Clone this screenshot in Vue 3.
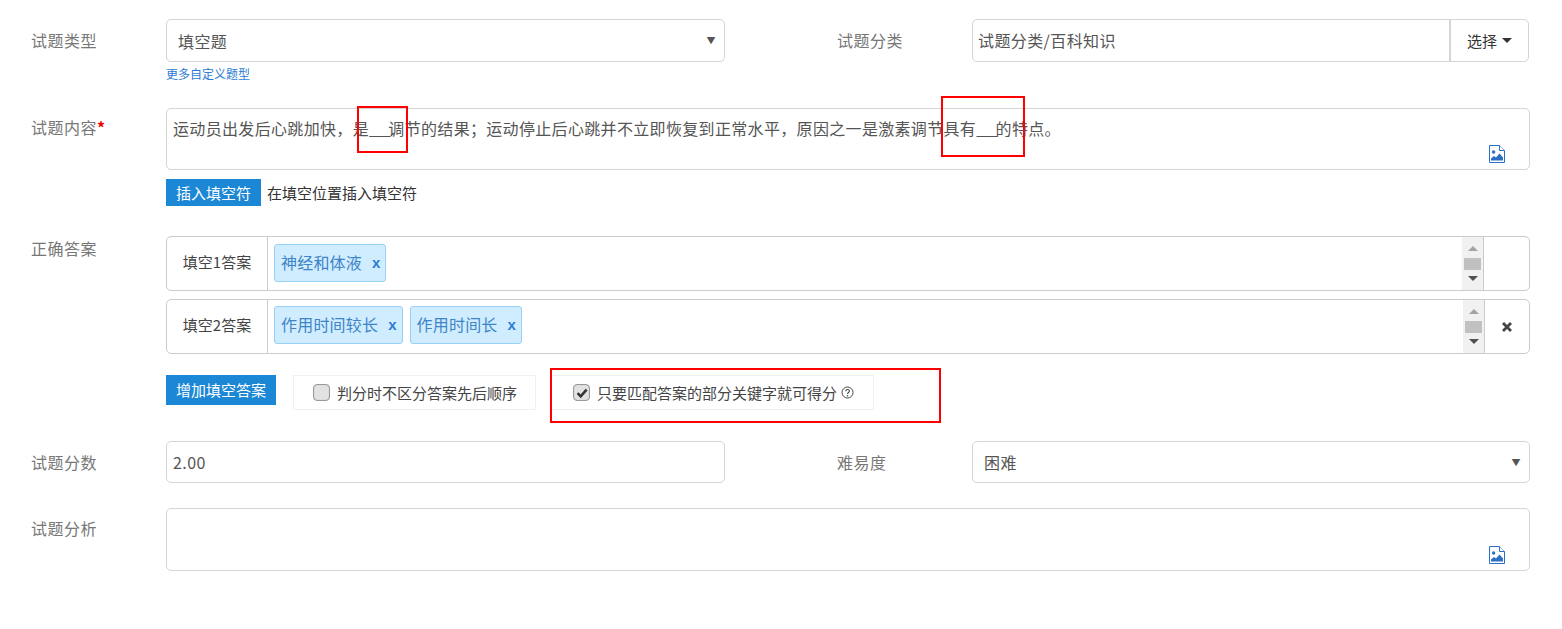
<script setup>
const blanks = [
  { name: '填空1答案', tags: ['神经和体液'], removable: false },
  { name: '填空2答案', tags: ['作用时间较长', '作用时间长'], removable: true }
]
</script>

<template>
  <div class="page">
    <div class="row row-type">
      <div class="label">试题类型</div>
      <div class="half">
        <div class="control select"><span>填空题</span><i class="caret-char">▼</i></div>
        <a class="hint">更多自定义题型</a>
      </div>
      <div class="label label-right">试题分类</div>
      <div class="group-cat">
        <div class="cat-value">试题分类/百科知识</div>
        <div class="cat-btn">选择<i class="caret"></i></div>
      </div>
    </div>

    <div class="row row-content">
      <div class="label">试题内容<b class="req">*</b></div>
      <div class="main">
        <div class="editor editor-content">
          运动员出发后心跳加快，是<span class="blank">___</span>调节的结果；运动停止后心跳并不立即恢复到正常水平，原因之一是激素调节具有<span class="blank">___</span>的特点。
          <svg class="file-icon" viewBox="0 0 16 18" width="16" height="18">
            <path d="M.5.5h10l5 5v12H.5z" fill="#fff" stroke="#2b6fc6" />
            <path d="M10.5.5v5h5" fill="#fff" stroke="#2b6fc6" />
            <circle cx="4.6" cy="7" r="1.7" fill="#2b6fc6" />
            <path d="M2 15.5v-2l3-2.5 2 1.5 3.5-4 3.5 4v3z" fill="#2b6fc6" />
          </svg>
        </div>
        <div class="insert-line">
          <button class="btn">插入填空符</button>
          <span class="insert-tip">在填空位置插入填空符</span>
        </div>
      </div>
    </div>

    <div class="row row-answer">
      <div class="label">正确答案</div>
      <div class="main">
        <div v-for="b in blanks" :key="b.name" class="answer" :class="{ removable: b.removable }">
          <div class="answer-name">{{ b.name }}</div>
          <div class="answer-tags">
            <span v-for="t in b.tags" :key="t" class="tag">{{ t }}<b class="tag-x">x</b></span>
          </div>
          <div class="scrollbar">
            <i class="arrow-up"></i>
            <i class="thumb"></i>
            <i class="arrow-down"></i>
          </div>
          <div class="answer-side">
            <svg v-if="b.removable" viewBox="0 0 12 12" width="12" height="12">
              <path d="M2 2l8 8M10 2l-8 8" stroke="#444" stroke-width="2.8" />
            </svg>
          </div>
        </div>
        <div class="options">
          <button class="btn btn-add">增加填空答案</button>
          <label class="check check-order">
            <span class="box"></span>判分时不区分答案先后顺序
          </label>
          <label class="check check-keyword">
            <span class="box">
              <svg viewBox="0 0 12 12" width="12" height="12">
                <path d="M1.6 6.2l3.1 3.1L10.6 2.6" fill="none" stroke="#333" stroke-width="2.6" />
              </svg>
            </span>只要匹配答案的部分关键字就可得分
            <svg class="help" viewBox="0 0 13 13" width="13" height="13">
              <circle cx="6.5" cy="6.5" r="5.5" fill="none" stroke="#444" stroke-width="1" />
              <path d="M4.7 5.2c0-2.3 3.7-2.3 3.7-.1 0 1.3-1.9 1.4-1.9 2.8" fill="none" stroke="#444" stroke-width="1.1" />
              <circle cx="6.5" cy="9.7" r=".8" fill="#444" />
            </svg>
          </label>
        </div>
      </div>
    </div>

    <div class="row row-score">
      <div class="label">试题分数</div>
      <div class="half">
        <div class="control control-short score">2.00</div>
      </div>
      <div class="label label-right">难易度</div>
      <div class="control control-short select select-right"><span>困难</span><i class="caret-char">▼</i></div>
    </div>

    <div class="row row-analysis">
      <div class="label">试题分析</div>
      <div class="main">
        <div class="editor editor-analysis">
          <svg class="file-icon" viewBox="0 0 16 18" width="16" height="18">
            <path d="M.5.5h10l5 5v12H.5z" fill="#fff" stroke="#2b6fc6" />
            <path d="M10.5.5v5h5" fill="#fff" stroke="#2b6fc6" />
            <circle cx="4.6" cy="7" r="1.7" fill="#2b6fc6" />
            <path d="M2 15.5v-2l3-2.5 2 1.5 3.5-4 3.5 4v3z" fill="#2b6fc6" />
          </svg>
        </div>
      </div>
    </div>

    <div class="mark mark-1"></div>
    <div class="mark mark-2"></div>
    <div class="mark mark-3"></div>
  </div>
</template>

<style>
html, body { background: #fff; }
</style>

<style scoped>
.page {
  position: relative;
  width: 1562px;
  height: 629px;
  box-sizing: border-box;
  padding: 19px 32px 0 31px;
  overflow: hidden;
  background: #fff;
  font-family: "Noto Sans CJK SC", "Noto Sans", sans-serif;
  font-size: 15px;
  color: #555;
}
.row { display: flex; align-items: flex-start; }
.row-type { height: 89px; }
.row-content { height: 128px; }
.row-answer { height: 205px; }
.row-score { height: 67px; }
.label {
  flex: 0 0 135px;
  font-size: 16px;
  line-height: 22px;
  padding-top: 10px;
  color: #777;
  letter-spacing: .5px;
}
.row-content .label { padding-top: 8px; }
.row-analysis .label { padding-top: 9px; }
.label-right { margin-left: 112px; }
.row-answer .label { padding-top: 1px; }
.req { color: #e00; font-weight: 700; letter-spacing: 0; }
.half { flex: 0 0 559px; }
.main { flex: 1; min-width: 0; }
.control {
  box-sizing: border-box;
  height: 43px;
  border: 1px solid #d5d5d5;
  border-radius: 5px;
  display: flex;
  align-items: center;
  font-size: 16px;
  letter-spacing: .4px;
}
.control-short { height: 42px; }
.select { justify-content: space-between; padding: 0 8px 0 11px; }
.select-right { flex: 1; }
.score { padding-left: 6px; }
.caret-char { font-style: normal; font-size: 9px; color: #555; }
.hint {
  display: block;
  margin-top: 5px;
  font-size: 12px;
  line-height: 14px;
  color: #2b7cd3;
}
.group-cat {
  flex: 1;
  display: flex;
  box-sizing: border-box;
  height: 43px;
  margin-right: 1px;
  border: 1px solid #d5d5d5;
  border-radius: 5px;
}
.cat-value {
  flex: 1;
  padding-left: 5px;
  font-size: 16px;
  line-height: 41px;
  letter-spacing: .4px;
  border-right: 2px solid #d5d5d5;
}
.cat-btn {
  flex: 0 0 77px;
  display: flex;
  align-items: center;
  justify-content: center;
  font-size: 15px;
  color: #333;
}
.caret {
  width: 0;
  height: 0;
  margin-left: 5px;
  border: 5px solid transparent;
  border-top-color: #333;
  border-bottom-width: 0;
}
.editor {
  position: relative;
  box-sizing: border-box;
  border: 1px solid #d5d5d5;
  border-radius: 5px;
  font-size: 16px;
  line-height: 22px;
  letter-spacing: .33px;
}
.editor-content { height: 62px; padding: 8px 6px; }
.editor-analysis { height: 63px; }
.blank { letter-spacing: -2.5px; }
.file-icon { position: absolute; right: 24px; bottom: 6px; }
.insert-line { display: flex; align-items: center; margin-top: 9px; }
.btn {
  border: 0;
  height: 27px;
  padding: 0 10px;
  background: #1c87d5;
  color: #fff;
  font: inherit;
  font-size: 15px;
  line-height: 27px;
}
.btn-add { height: 30px; line-height: 30px; }
.insert-tip { margin-left: 6px; color: #333; }
.answer {
  box-sizing: border-box;
  display: flex;
  height: 55px;
  margin-bottom: 8px;
  border: 1px solid #ccc;
  border-radius: 5px;
}
.answer-name {
  flex: 0 0 101px;
  box-sizing: border-box;
  border-right: 1px solid #ccc;
  text-align: center;
  font-size: 15px;
  line-height: 50px;
  color: #444;
}
.answer-tags { flex: 1; display: flex; gap: 7px; padding: 7px 6px; }
.removable .answer-tags { padding-top: 6px; }
.tag {
  height: 38px;
  box-sizing: border-box;
  display: flex;
  align-items: center;
  padding: 0 5px 2px 6px;
  background: #d0ecff;
  border: 1px solid #99d1f5;
  border-radius: 3px;
  font-size: 16px;
  letter-spacing: .2px;
  color: #3d85c6;
}
.tag-x { margin-left: 10px; font-size: 15px; font-family: "Liberation Sans", sans-serif; color: #2b7cd3; letter-spacing: 0; }
.scrollbar {
  flex: 0 0 21px;
  position: relative;
  background: #f1f1f1;
}
.thumb { position: absolute; left: 2px; right: 2px; top: 21px; height: 12px; background: #c1c1c1; }
.arrow-up, .arrow-down {
  position: absolute;
  left: 6px;
  width: 0;
  height: 0;
  border: 5px solid transparent;
}
.arrow-up { top: 9px; border-top-width: 0; border-bottom-color: #a3a3a3; }
.arrow-down { top: 39px; border-bottom-width: 0; border-top-color: #505050; }
.answer-side {
  flex: 0 0 45px;
  border-left: 1px solid #ccc;
  display: flex;
  align-items: center;
  justify-content: center;
}
.removable .answer-side { flex-basis: 44px; }
.options { display: flex; align-items: flex-start; margin-top: 21px; }
.options .btn { margin-right: 17px; }
.check {
  box-sizing: border-box;
  display: flex;
  align-items: center;
  height: 35px;
  border: 1px solid #f0f0f0;
  font-size: 15px;
  color: #444;
}
.check-order { width: 243px; padding-left: 19px; }
.check-keyword { width: 323px; margin-left: 15px; padding-left: 21px; }
.box {
  flex: none;
  width: 17px;
  height: 17px;
  box-sizing: border-box;
  margin-right: 7px;
  border: 1px solid #999;
  border-radius: 4px;
  background: #e2e2e2;
  box-shadow: inset 0 0 1px #aaa;
  display: flex;
  align-items: center;
  justify-content: center;
}
.help { margin-left: 4px; }
.mark {
  position: absolute;
  box-sizing: border-box;
  border: 2px solid #f00;
}
.mark-1 { left: 357px; top: 106px; width: 51px; height: 47px; }
.mark-2 { left: 941px; top: 96px; width: 84px; height: 61px; }
.mark-3 { left: 550px; top: 368px; width: 391px; height: 55px; }
</style>
